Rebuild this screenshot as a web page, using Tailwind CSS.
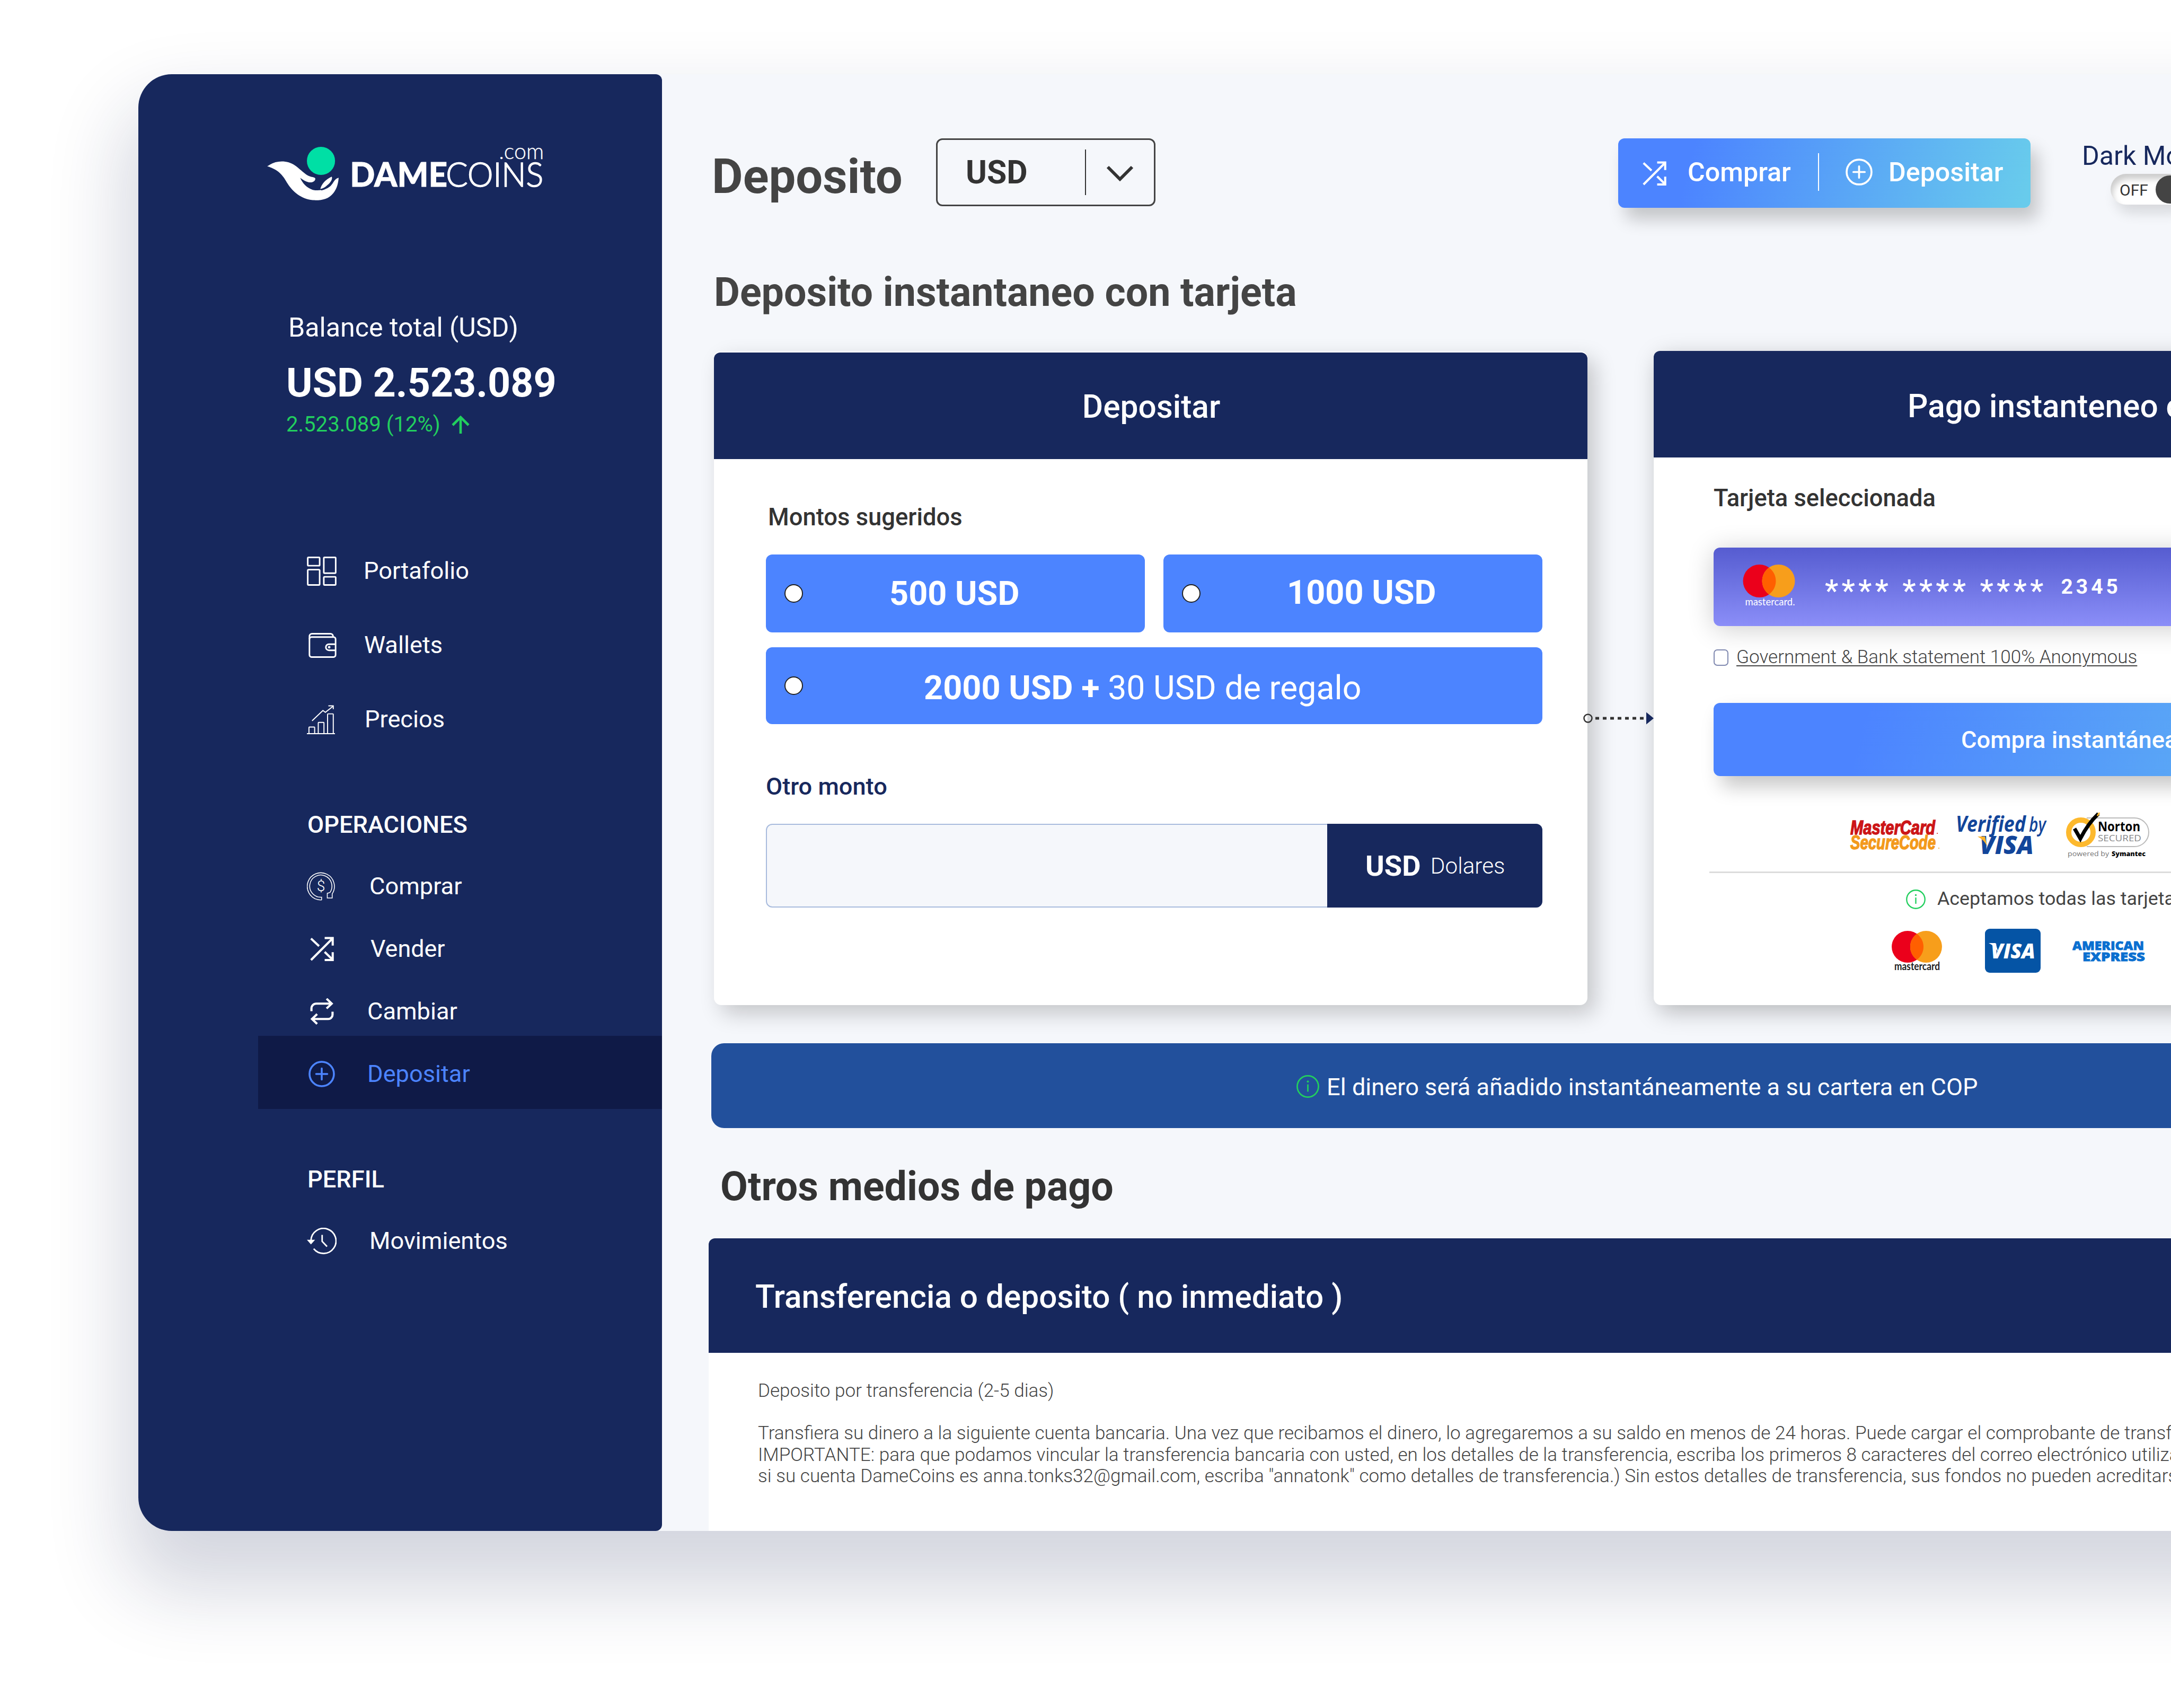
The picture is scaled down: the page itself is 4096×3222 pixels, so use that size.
<!DOCTYPE html>
<html lang="es">
<head>
<meta charset="utf-8">
<title>DameCoins - Deposito</title>
<script src="https://cdn.jsdelivr.net/npm/@tailwindcss/browser@4"></script>
</head>
<body class="w-[4096px] h-[3222px] overflow-hidden bg-white font-['Roboto',sans-serif] whitespace-nowrap">
<svg class="hidden">
  <symbol id="shuffle" viewBox="0 0 88 91"><g fill="none" stroke="currentColor" stroke-width="8"><path d="M3 87 82 8M54 5H84V33M3 7 33 35M54 57 82 84M84 58V87H54"/></g></symbol>
  <symbol id="plus" viewBox="0 0 50 50"><g fill="none" stroke="currentColor" stroke-width="3.6"><circle cx="25" cy="25" r="23"/><path d="M25 14.5V35.5M14.5 25H35.5" stroke-linecap="round"/></g></symbol>
  <symbol id="info" viewBox="0 0 44 44"><circle cx="22" cy="22" r="20.5" fill="none" stroke="currentColor" stroke-width="2.8"/><path d="M22 18V32" stroke="currentColor" stroke-width="2.8"/><circle cx="22" cy="12.5" r="2" fill="currentColor"/></symbol>
  <symbol id="mc" viewBox="0 0 98 62"><circle cx="31" cy="31" r="31" fill="#eb001b"/><circle cx="67" cy="31" r="31" fill="#f79e1b"/><path d="M49 5.8a31 31 0 0 1 0 50.4a31 31 0 0 1 0-50.4z" fill="#ff5f00"/></symbol>
</svg>
<div class="ml-[261px] mt-[140px] flex h-[2748px] w-[4300px] rounded-[63px] bg-[#f5f7fb] shadow-[0_85px_145px_25px_rgba(21,33,82,0.185)]">

  <aside class="flex w-[988px] flex-none flex-col rounded-l-[63px] rounded-r-[12px] bg-[#17285d] pt-[133px] text-[45.2px] text-white">
    <svg class="ml-[241px] h-[107px] w-[525px] flex-none" viewBox="90 100 1320 270">
      <circle cx="349" cy="177" r="67" fill="#00dfa5"/>
      <path fill="#fff" d="M93 203C125 180 160 175 195 184C240 198 262 238 295 250C308 255 322 254 322 262C322 274 308 281 292 279C275 276 262 266 250 258C262 285 282 306 310 315C345 322 385 312 400 290C412 275 415 262 433 257C432 280 425 310 408 330C385 360 350 366 310 364C255 358 215 325 190 285C170 250 150 218 93 203Z"/>
      <path fill="#fff" d="M346 311C350 290 370 265 400 252C406 262 395 280 380 292C370 302 358 309 346 311Z"/>
      <path fill="none" stroke="#17285d" stroke-width="4" d="M350 316C375 310 396 292 408 262"/>
      <g fill="#fff" stroke="#fff" font-family="Lato">
        <text x="487" y="300" font-size="160" font-weight="900" stroke-width="2" textLength="464" lengthAdjust="spacingAndGlyphs">DAME</text>
        <text x="944" y="300" font-size="160" font-weight="300" stroke-width="4" textLength="464" lengthAdjust="spacingAndGlyphs">COINS</text>
        <text x="1196" y="168" font-size="104" font-weight="300" stroke-width="1" textLength="214" lengthAdjust="spacingAndGlyphs">.com</text>
      </g>
    </svg>
    <div class="ml-[283px] mt-[208px] text-[50.2px] leading-[60px]">Balance total (USD)</div>
    <div class="ml-[279px] mt-[34px] text-[75.3px] font-bold leading-[80px]">USD 2.523.089</div>
    <div class="ml-[279px] mt-[14px] flex items-center text-[40.1px] leading-[50px] text-[#22cf5e]">2.523.089 (12%)
      <svg class="ml-[21px] h-[34px] w-[34px]" viewBox="0 0 34 34" fill="none" stroke="currentColor" stroke-width="4.6"><path d="M17 34V3M2 18 17 3 32 18"/></svg>
    </div>

    <nav class="mt-[181px] flex flex-col pl-[318px]">
      <a class="flex h-[140px] items-center"><svg class="mr-[51px] h-[55px] w-[56px]" viewBox="0 0 57 56.3" fill="none" stroke="#fff" stroke-width="3"><rect x="1.5" y="1.5" width="23" height="16" rx="1.5"/><rect x="1.5" y="25.2" width="23" height="29.6" rx="1.5"/><rect x="32.5" y="1.5" width="23" height="30.5" rx="1.5"/><rect x="32.5" y="39" width="23" height="15.8" rx="1.5"/></svg><span>Portafolio</span></a>
      <a class="flex h-[140px] items-center"><svg class="ml-[3px] mr-[52px] h-[47px] w-[53px]" viewBox="0 0 54 48.6" fill="none" stroke="#fff" stroke-width="3"><rect x="1.5" y="8" width="51" height="39" rx="4"/><path d="M1.5 12V6.5a5 5 0 0 1 5-5H42.5a5 5 0 0 1 5 5V8M52.5 21.9H39.5a6 6 0 0 0 0 12H52.5"/><circle cx="40" cy="27.8" r="1"/></svg><span>Wallets</span></a>
      <a class="flex h-[140px] items-center"><svg class="mr-[56px] h-[55px] w-[53px]" viewBox="0 0 54.3 56.3" fill="none" stroke="#fff" stroke-width="2"><path d="M0 55.3H54.3M4 55V43.5a1 1 0 0 1 1-1H14a1 1 0 0 1 1 1V55M22 55V34.5a1 1 0 0 1 1-1H32a1 1 0 0 1 1 1V55M40 55V18a1 1 0 0 1 1-1H50a1 1 0 0 1 1 1V55M10 30.5 31 10.5 35.7 14 51 2M41.5 1.5H51V8"/></svg><span>Precios</span></a>
    </nav>

    <div class="ml-[319px] mt-[99px] text-[45.2px] font-medium leading-[60px]">OPERACIONES</div>
    <nav class="mt-[27px] flex flex-col">
      <a class="flex h-[118px] items-center pl-[318px]"><svg class="mr-[65px] h-[54px] w-[53px]" viewBox="0 0 54.4 55" fill="none" stroke="#fff" stroke-width="1.6"><path d="M28.5 54V48.5A21.5 21.5 0 1 1 44.5 39.5L39.5 41V50H49V42A26.3 26.3 0 1 0 21 53.2Q24 54 28.5 54"/><text x="27.2" y="37" text-anchor="middle" font-size="29" font-weight="300" fill="#fff" stroke="none">$</text></svg><span>Comprar</span></a>
      <a class="flex h-[118px] items-center pl-[324px]"><svg class="mr-[69px] h-[46px] w-[45px]"><use href="#shuffle"/></svg><span class="text-[44.9px]">Vender</span></a>
      <a class="flex h-[105px] items-center pl-[324px] pt-[12px]"><svg class="mr-[63px] h-[50px] w-[45px]" viewBox="0 0 88 98" fill="none" stroke="#fff" stroke-width="8"><path d="M5 48V38a18 18 0 0 1 18-18H80M61 2 80 20 61 38M83 50V60a16 16 0 0 1-16 17H8M26 59 7 77 26 95"/></svg><span>Cambiar</span></a>
      <a class="ml-[226px] flex h-[138px] items-center bg-[#0f1a47] pl-[95px] pt-[5px] text-[#4c84ff]"><svg class="mr-[61px] h-[50px] w-[50px]"><use href="#plus"/></svg><span>Depositar</span></a>
    </nav>

    <div class="ml-[319px] mt-[103px] text-[45.2px] font-medium leading-[60px]">PERFIL</div>
    <a class="mt-[27px] flex h-[118px] items-center pl-[318px]"><svg class="mr-[62px] h-[50px] w-[56px]" viewBox="0 0 109 97" fill="none" stroke="#fff" stroke-width="5.5"><path d="M15 46A46 46 0 1 1 25 77M56 26V50L74 69"/><path d="M0 44H30L15 61Z" fill="#fff" stroke="none"/></svg><span>Movimientos</span></a>
  </aside>

  <main class="flex min-w-0 flex-1 flex-col pl-[87px]">
    <header class="ml-[7px] mt-[121px] flex h-[131px] flex-none items-start">
      <h1 class="mt-[22px] w-[423px] flex-none text-[90.3px] font-bold leading-[100px] text-[#444]">Deposito</h1>
      <div class="flex h-[128px] w-[414px] flex-none items-center rounded-[12px] border-[3px] border-[#444] pl-[53px] pr-[38px]">
        <span class="w-[225px] pt-[2px] text-[60.6px] font-bold text-[#333]">USD</span>
        <span class="h-[86px] w-[2px] bg-[#333]"></span>
        <svg class="ml-auto mt-[4px] h-[30px] w-[52px]" viewBox="0 0 52 30" fill="none" stroke="#333" stroke-width="6"><path d="M3 3 26 26 49 3"/></svg>
      </div>
      <div class="ml-[873px] flex h-[131px] w-[778px] flex-none items-center rounded-[12px] bg-[linear-gradient(105deg,#4c84ff_18%,#68cbec_98%)] pb-[4px] text-[50.2px] font-medium text-white shadow-[14px_22px_32px_rgba(0,0,0,0.2)]">
        <svg class="ml-[46px] mt-[4px] h-[46px] w-[45px]"><use href="#shuffle"/></svg>
        <span class="ml-[40px] w-[246px]">Comprar</span>
        <span class="h-[71px] w-[2px] bg-white"></span>
        <svg class="ml-[50px] h-[51px] w-[51px]"><use href="#plus"/></svg>
        <span class="ml-[30px]">Depositar</span>
      </div>
      <div class="ml-[97px] flex-none">
        <div class="mt-[3px] text-[50px] leading-[60px] text-[#17285d]">Dark Mode</div>
        <div class="ml-[54px] mt-[4px] flex h-[58px] w-[140px] items-center justify-between rounded-full bg-white pl-[17px] pr-[2px] shadow-[inset_4px_10px_12px_rgba(0,0,0,0.2),10px_16px_24px_rgba(0,0,0,0.12)]">
          <span class="pt-[2px] text-[30px] text-[#333]">OFF</span><span class="h-[53px] w-[53px] rounded-full bg-[#444]"></span>
        </div>
      </div>
    </header>

    <h2 class="ml-[11px] mt-[119px] text-[75.3px] font-bold leading-[80px] text-[#444]">Deposito instantaneo con tarjeta</h2>

    <div class="relative ml-[11px] mt-[71px] flex h-[1234px] flex-none gap-[125px]">
      <section class="flex w-[1648px] flex-none flex-col rounded-[14px] bg-white pt-[3px] shadow-[14px_16px_40px_rgba(0,0,0,0.2)]">
        <h3 class="flex h-[201px] items-center justify-center rounded-t-[12px] bg-[#17285d] pl-[2px] pt-[5px] text-[60.4px] font-medium text-white">Depositar</h3>
        <div class="pl-[98px] pr-[85px]">
          <div class="ml-[4px] mt-[80px] text-[45.4px] font-medium leading-[60px] text-[#333]">Montos sugeridos</div>
          <div class="mt-[40px] grid grid-cols-2 gap-x-[35px] gap-y-[28px] text-[63px] font-bold leading-none text-white">
            <div class="flex h-[147px] items-center rounded-[12px] bg-[#4c84ff] pl-[35px]"><i class="h-[35px] w-[35px] rounded-full border-2 border-[#222] bg-white"></i><span class="ml-[163px]">500 USD</span></div>
            <div class="flex h-[147px] items-center rounded-[12px] bg-[#4c84ff] pl-[35px]"><i class="h-[35px] w-[35px] rounded-full border-2 border-[#222] bg-white"></i><span class="ml-[163px] pb-[4px]">1000 USD</span></div>
            <div class="col-span-2 flex h-[145px] items-center rounded-[12px] bg-[#4c84ff] pl-[35px]"><i class="h-[35px] w-[35px] rounded-full border-2 border-[#222] bg-white"></i><span class="ml-[228px] pt-[8px]">2000 USD + <span class="text-[62.6px] font-normal">30 USD de regalo</span></span></div>
          </div>
          <div class="mt-[88px] text-[45.2px] font-medium leading-[60px] text-[#17285d]">Otro monto</div>
          <div class="mt-[40px] flex h-[158px] rounded-[12px] border-2 border-[#a8bbdd] bg-[#f5f7fb]">
            <div class="-my-[2px] -mr-[2px] ml-auto flex w-[406px] items-center rounded-r-[12px] bg-[#17285d] text-white">
              <span class="ml-[72px] pt-[2px] text-[54.4px] font-bold">USD</span><span class="ml-[18px] pt-[1px] text-[42.3px] font-light">Dolares</span>
            </div>
          </div>
        </div>
      </section>

      <section class="flex w-[1700px] flex-none flex-col rounded-[14px] bg-white pl-[113px] shadow-[8px_12px_44px_rgba(0,0,0,0.26)]">
        <h3 class="-ml-[113px] flex h-[201px] flex-none items-center rounded-t-[12px] bg-[#17285d] pl-[479px] pt-[10px] text-[60.3px] font-medium text-white">Pago instanteneo con tarjeta</h3>
        <div class="mt-[47px] text-[45.3px] font-medium leading-[60px] text-[#333]">Tarjeta seleccionada</div>
        <div class="mt-[63px] flex h-[148px] flex-none items-center rounded-l-[12px] bg-linear-to-b from-[#565cd0] to-[#8b8ef8] pl-[55px] text-white shadow-[0_5px_50px_rgba(0,0,0,0.2)]">
          <svg class="h-[84px] w-[100px]" viewBox="0 0 100 84"><use href="#mc" width="99" height="62"/><text x="4.5" y="77" font-family="Lato" font-size="20" fill="#fff" textLength="94" lengthAdjust="spacingAndGlyphs">mastercard.</text></svg>
          <span class="ml-[55px] mt-[15px] text-[57px] font-medium leading-none tracking-[6.2px]">**** **** ****</span><span class="ml-[27px] pt-[1px] text-[39px] font-bold tracking-[6px]">2345</span>
        </div>
        <div class="mt-[39px] flex h-[40px] items-center text-[35.1px] font-light text-[#444]"><i class="mr-[15px] h-[31px] w-[28px] rounded-[7px] border-2 border-[#8089b0]"></i><span class="-mt-[1px] underline decoration-2 underline-offset-[4px]">Government &amp; Bank statement 100% Anonymous</span></div>
        <div class="mt-[66px] flex h-[138px] flex-none items-center rounded-l-[12px] bg-[linear-gradient(105deg,#4c84ff_18%,#68cbec_98%)] pl-[467px] pt-[2px] text-[45.2px] font-medium text-white shadow-[14px_20px_36px_rgba(0,0,0,0.22)]">Compra instantánea</div>

        <div class="ml-[257px] mt-[66px] flex items-start">
          <svg class="h-[92px] w-[175px]" viewBox="0 0 175 92" font-family="Liberation Sans" font-weight="700" font-style="italic" stroke-width="1.5"><text x="1" y="44" font-size="36" fill="#cc1517" stroke="#cc1517" textLength="160" lengthAdjust="spacingAndGlyphs">MasterCard</text><text x="1" y="72" font-size="36" fill="#f39a1c" stroke="#f39a1c" textLength="161" lengthAdjust="spacingAndGlyphs">SecureCode</text><circle cx="165" cy="42" r="1" fill="#cc1517"/><circle cx="168" cy="70" r="1" fill="#f39a1c"/></svg>
          <svg class="ml-[25px] h-[92px] w-[175px]" viewBox="0 0 175 92" font-family="Open Sans" font-style="italic" fill="#12459a"><text x="0" y="39" font-size="41" font-weight="700" textLength="132" lengthAdjust="spacingAndGlyphs">Verified</text><text x="138" y="39" font-size="38" font-weight="600" textLength="32" lengthAdjust="spacingAndGlyphs">by</text><text x="45" y="81" font-size="47" font-weight="800" textLength="102" lengthAdjust="spacingAndGlyphs">VISA</text><path d="M41 48H55L59 66Q53 54 41 48Z" fill="#fbb22b"/></svg>
          <svg class="ml-[32px] h-[92px] w-[165px]" viewBox="0 0 165 92" font-family="Open Sans"><path d="M40 13H130a27 27 0 0 1 0 54H40" fill="#fff" stroke="#bbb" stroke-width="2"/><circle cx="29" cy="40" r="23" fill="#fff" stroke="#fdb92e" stroke-width="10"/><path d="M17 33 28 52Q42 24 62 5" fill="none" stroke="#000" stroke-width="7"/><path d="M60 9 64 3" stroke="#fdb92e" stroke-width="3"/><text x="61" y="38" font-size="25" font-weight="700" textLength="80" lengthAdjust="spacingAndGlyphs">Norton</text><text x="61" y="57" font-size="17" fill="#888" textLength="82" lengthAdjust="spacingAndGlyphs">SECURED</text><text x="4" y="85" font-size="13" fill="#777" textLength="78" lengthAdjust="spacingAndGlyphs">powered by</text><text x="87" y="85" font-size="13" font-weight="800" textLength="64" lengthAdjust="spacingAndGlyphs">Symantec</text></svg>
        </div>
        <div class="-ml-[8px] mt-[22px] h-[3px] flex-none bg-[#dcdcdc]"></div>
        <div class="ml-[363px] mt-[29px] flex h-[40px] flex-none items-center text-[35.8px] text-[#444]"><svg class="mr-[22px] h-[37px] w-[37px] text-[#22cf5e]"><use href="#info"/></svg><span>Aceptamos todas las tarjetas</span></div>
        <div class="ml-[336px] mt-[36px] flex items-start">
          <svg class="mt-[4px] h-[84px] w-[96px]" viewBox="0 0 96 84"><use href="#mc" width="95" height="60"/><text x="5" y="74" font-family="Lato" font-size="20" font-weight="700" fill="#222" textLength="86" lengthAdjust="spacingAndGlyphs">mastercard</text></svg>
          <svg class="ml-[80px] h-[83px] w-[105px] rounded-[9px] bg-[#0554a5]" viewBox="0 0 105 83"><text x="11" y="56" font-family="Open Sans" font-size="39" font-weight="800" font-style="italic" fill="#fff" textLength="84" lengthAdjust="spacingAndGlyphs">VISA</text><path d="M7 27H20L25 44Q18 32 7 27Z" fill="#fff"/></svg>
          <svg class="ml-[60px] mt-[18px] h-[50px] w-[140px]" viewBox="0 0 140 50" font-family="Open Sans" font-size="23.5" font-weight="800" fill="#0a6fd0" stroke="#0a6fd0" stroke-width=".8"><text x="0" y="22" textLength="135" lengthAdjust="spacingAndGlyphs">AMERICAN</text><text x="19" y="42.5" textLength="118" lengthAdjust="spacingAndGlyphs">EXPRESS</text></svg>
        </div>
      </section>

      <svg class="absolute left-[1640px] top-[680px] h-[26px] w-[134px]" viewBox="0 0 134 26"><circle cx="9" cy="13" r="7.5" fill="none" stroke="#333" stroke-width="2.5"/><path d="M23 13H116" stroke="#333" stroke-width="5" stroke-dasharray="7 7"/><path d="M119 1.5 133 13 119 24.5Z" fill="#17285d"/></svg>
    </div>

    <div class="ml-[6px] mt-[72px] flex h-[160px] flex-none items-center rounded-l-[24px] bg-[#22509c] pl-[1104px] pt-[3px] text-[45.2px] text-white"><svg class="mr-[14px] h-[43px] w-[43px] text-[#22cf5e]"><use href="#info"/></svg><span class="pt-[2px]">El dinero será añadido instantáneamente a su cartera en COP</span></div>

    <h2 class="ml-[23px] mt-[70px] text-[75.3px] font-bold leading-[80px] text-[#333]">Otros medios de pago</h2>

    <section class="ml-px mt-[58px] flex flex-1 flex-col rounded-tl-[12px] bg-white text-[35.08px] font-light leading-[40.3px] text-[#444]">
      <h3 class="flex h-[216px] items-center rounded-tl-[12px] bg-[#17285d] pl-[88px] pt-[6px] text-[60.3px] font-medium text-white">Transferencia o deposito ( no inmediato )</h3>
      <p class="ml-[93px] mt-[51px]">Deposito por transferencia (2-5 dias)</p>
      <p class="ml-[93px] mt-[40px]">Transfiera su dinero a la siguiente cuenta bancaria. Una vez que recibamos el dinero, lo agregaremos a su saldo en menos de 24 horas. Puede cargar el comprobante de transferencia<br>IMPORTANTE: para que podamos vincular la transferencia bancaria con usted, en los detalles de la transferencia, escriba los primeros 8 caracteres del correo electrónico utilizado<br>si su cuenta DameCoins es anna.tonks32@gmail.com, escriba "annatonk" como detalles de transferencia.) Sin estos detalles de transferencia, sus fondos no pueden acreditarse</p>
    </section>
  </main>
</div>
</body>
</html>
